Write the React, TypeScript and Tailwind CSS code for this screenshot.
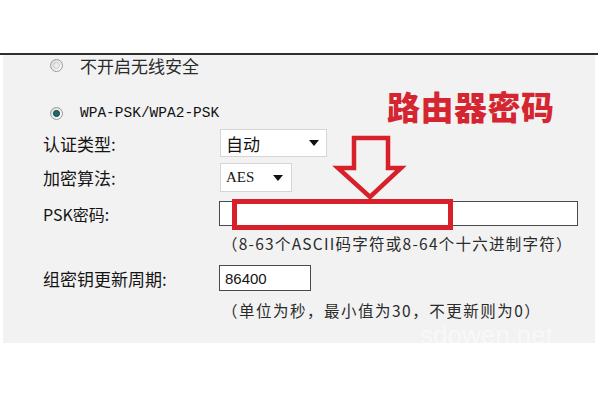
import React from "react";

const cjk = { fontFamily: '"Noto Sans CJK SC", "Noto Sans", sans-serif' };
const mono = { fontFamily: '"Liberation Mono", "Noto Sans CJK SC", monospace' };

function Radio({ checked }: { checked?: boolean }) {
  return (
    <div className="w-[13px] h-[13px] rounded-full border border-[#9a9a9a] bg-gradient-to-br from-[#d8d8d8] to-[#ffffff] flex items-center justify-center">
      {checked ? (
        <div className="w-[7px] h-[7px] rounded-full bg-[#1d6b6e] border border-[#0f3f40]" />
      ) : (
        <div className="w-[7px] h-[7px] rounded-full border border-[#c8c8c8] bg-[#ececec]" />
      )}
    </div>
  );
}

function Caret() {
  return (
    <svg width="10" height="6" viewBox="0 0 10 6">
      <polygon points="0,0 10,0 5,6" fill="#111" />
    </svg>
  );
}

export default function App() {
  return (
    <div className="relative w-[600px] h-[400px] bg-white overflow-hidden text-[#141414]" style={cjk}>
      <div className="h-[53px]" />
      <div className="h-[2px] w-[598px] bg-[#2e2e2e]" />
      <div className="ml-[3px] w-[592px] h-[288px] bg-[#f2f2f2] flex flex-col">
        {/* row 1 */}
        <div className="h-[20px] flex items-center pl-[47px] gap-[17px]">
          <Radio />
          <span className="text-[17px] leading-none text-[#2a2a2a]">不开启无线安全</span>
        </div>
        {/* row 2 */}
        <div className="mt-[28px] h-[20px] flex items-center pl-[47px] gap-[17px]">
          <Radio checked />
          <span className="text-[14.5px] leading-none text-[#111]" style={mono}>WPA-PSK/WPA2-PSK</span>
        </div>
        {/* auth type */}
        <div className="mt-[6px] h-[28px] flex items-center">
          <span className="w-[217px] pl-[40px] text-[17px] leading-none">认证类型:</span>
          <div className="w-[107px] h-[28px] bg-white border border-[#d6d6d6] flex items-center justify-between pl-[5px] pr-[7px]">
            <span className="text-[17px] leading-none">自动</span>
            <Caret />
          </div>
        </div>
        {/* encryption */}
        <div className="mt-[6px] h-[29px] flex items-center">
          <span className="w-[217px] pl-[40px] text-[17px] leading-none">加密算法:</span>
          <div className="w-[72px] h-[29px] bg-white border border-[#d6d6d6] flex items-center justify-between pl-[5px] pr-[8px]">
            <span className="text-[15px] leading-none" style={{ fontFamily: '"Liberation Serif", serif' }}>AES</span>
            <Caret />
          </div>
        </div>
        {/* PSK */}
        <div className="mt-[9px] h-[25px] flex items-center">
          <span className="w-[216px] pl-[40px] text-[16px] leading-none">PSK密码:</span>
          <div className="w-[359px] h-[25px] bg-white border border-[#4a4a4a]" />
        </div>
        <div className="mt-[8px] h-[20px] flex items-center pl-[219px]">
          <span className="text-[15.5px] leading-none text-[#2a2a2a] whitespace-nowrap tracking-[1.25px]">（8-63个ASCII码字符或8-64个十六进制字符）</span>
        </div>
        {/* group key */}
        <div className="mt-[11px] h-[26px] flex items-center">
          <span className="w-[216px] pl-[40px] text-[17px] leading-none">组密钥更新周期:</span>
          <div className="w-[92px] h-[26px] bg-white border border-[#4a4a4a] flex items-center pl-[5px]">
            <span className="text-[15px] leading-none" style={{ fontFamily: '"Liberation Sans", sans-serif' }}>86400</span>
          </div>
        </div>
        <div className="mt-[10px] h-[20px] flex items-center pl-[219px]">
          <span className="text-[15.5px] leading-none text-[#2a2a2a] whitespace-nowrap tracking-[1.5px]">（单位为秒，最小值为30，不更新则为0）</span>
        </div>
      </div>

      {/* annotations */}
      <div
        className="absolute left-[387px] top-[90px] text-[33px] leading-none font-black text-[#d42530] tracking-[0.5px]"
        style={cjk}
      >
        路由器密码
      </div>
      <svg className="absolute left-0 top-0" width="600" height="400" viewBox="0 0 600 400">
        <polygon
          points="354,138 388,138 388,168 401,168 370,197 338,168 354,168"
          fill="none"
          stroke="#d8202a"
          strokeWidth="4.5"
          strokeLinejoin="miter"
        />
        <rect x="234.5" y="201.5" width="216" height="26" fill="none" stroke="#d8202a" strokeWidth="5" />
      </svg>
      <div
        className="absolute left-[420px] top-[322px] text-[26px] leading-none text-white opacity-50"
        style={{ fontFamily: '"Liberation Sans", sans-serif' }}
      >
        sdowen.net
      </div>
    </div>
  );
}
